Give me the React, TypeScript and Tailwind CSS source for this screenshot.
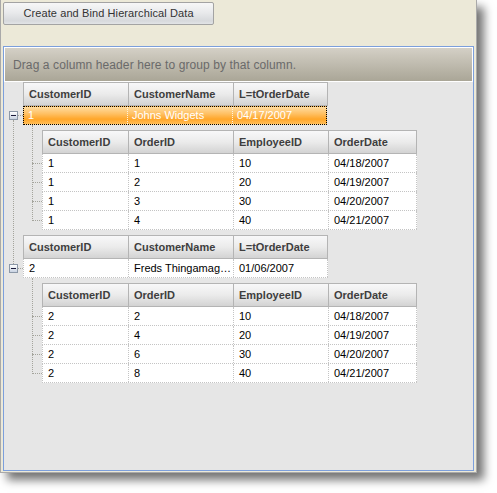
import React from "react";

const font = { fontFamily: '"Liberation Sans", Arial, sans-serif' };

type Col = { label: string; w: string };

const parentCols: Col[] = [
  { label: "CustomerID", w: "w-[105px]" },
  { label: "CustomerName", w: "w-[105px]" },
  { label: "L=tOrderDate", w: "w-[94px]" },
];

const childCols: Col[] = [
  { label: "CustomerID", w: "w-[86px]" },
  { label: "OrderID", w: "w-[105px]" },
  { label: "EmployeeID", w: "w-[95px]" },
  { label: "OrderDate", w: "w-[88px]" },
];

function Header({ cols }: { cols: Col[] }) {
  return (
    <div className="flex h-[24px] w-fit border-y border-l border-[#b4b4b4] bg-gradient-to-b from-[#f8f8f9] via-[#ebebeb] to-[#d3d3d3]">
      {cols.map((c) => (
        <div
          key={c.label}
          className={`${c.w} flex items-center overflow-hidden whitespace-nowrap border-r border-[#b4b4b4] pl-[5px] text-[11px] font-bold text-[#3e3e3e]`}
        >
          {c.label}
        </div>
      ))}
    </div>
  );
}

function Row({ cols, values, selected }: { cols: Col[]; values: string[]; selected?: boolean }) {
  if (selected) {
    return (
      <div className="flex h-[19px] w-fit border border-dotted border-black bg-[linear-gradient(to_bottom,#ffdca0_0%,#ffc063_40%,#ffa629_72%,#ffbd58_100%)]">
        {cols.map((c, i) => (
          <div
            key={c.label}
            className={`${i === 0 ? "w-[104px]" : i === cols.length - 1 ? "w-[93px]" : c.w} flex items-center overflow-hidden whitespace-nowrap ${i < cols.length - 1 ? "border-r border-dotted border-[#fff3dd]" : ""} pl-[4px] text-[11px] text-white`}
          >
            {values[i]}
          </div>
        ))}
      </div>
    );
  }
  return (
    <div className="flex h-[19px] w-fit border-b border-l border-dotted border-[#c4c4c4] bg-white">
      {cols.map((c, i) => (
        <div
          key={c.label}
          className={`${c.w} flex items-center overflow-hidden whitespace-nowrap border-r border-dotted border-[#c4c4c4] pl-[5px] text-[11px] text-black`}
        >
          {values[i]}
        </div>
      ))}
    </div>
  );
}

function MinusBox({ top }: { top: string }) {
  return (
    <div
      className={`absolute left-[5px] ${top} flex h-[9px] w-[9px] items-center justify-center border border-[#8c98a8] bg-gradient-to-b from-white to-[#c9d3e2]`}
    >
      <div className="h-px w-[5px] bg-[#1a1a3a]" />
    </div>
  );
}

const VLine = ({ cls }: { cls: string }) => (
  <div className={`absolute w-0 border-l border-dotted border-[#a4a49c] ${cls}`} />
);
const HLine = ({ cls }: { cls: string }) => (
  <div className={`absolute h-0 border-t border-dotted border-[#a4a49c] ${cls}`} />
);

export default function App() {
  const orders1 = [
    ["1", "1", "10", "04/18/2007"],
    ["1", "2", "20", "04/19/2007"],
    ["1", "3", "30", "04/20/2007"],
    ["1", "4", "40", "04/21/2007"],
  ];
  const orders2 = [
    ["2", "2", "10", "04/18/2007"],
    ["2", "4", "20", "04/19/2007"],
    ["2", "6", "30", "04/20/2007"],
    ["2", "8", "40", "04/21/2007"],
  ];
  return (
    <div className="h-[493px] w-[497px] bg-white" style={font}>
      <div className="flex h-[473px] w-[477px] flex-col border-x border-b border-[#a9a9a9] bg-[#ece9d8] pl-[2px] pr-[2px] shadow-[7px_7px_9px_rgba(0,0,0,0.55)]">
        <div className="mt-[2px] flex h-[23px] w-[211px] items-center justify-center rounded-[2px] border border-[#a3a3a3] bg-[linear-gradient(to_bottom,#f7f7f7_0%,#e9eaec_45%,#d7d9dc_85%,#e2e4e6_100%)] text-[11px] tracking-[0.1px] text-[#333]">
          Create and Bind Hierarchical Data
        </div>
        <div className="mt-[21px] flex h-[425px] flex-col border border-[#7c9fdc]">
          <div className="flex h-[35px] shrink-0 items-center border border-white bg-gradient-to-b from-[#d4d0c6] to-[#aaa697] pl-[8px] text-[12px] tracking-[0.1px] text-[#6a6a6a]">
            Drag a column header here to group by that column.
          </div>
          <div className="relative flex-1 bg-[#e6e6e6]">
            <MinusBox top="top-[29px]" />
            <MinusBox top="top-[182px]" />
            <VLine cls="left-[9px] top-[38px] h-[144px]" />
            <HLine cls="left-[14px] top-[33px] w-[5px]" />
            <HLine cls="left-[14px] top-[186px] w-[5px]" />

            <VLine cls="left-[28px] top-[43px] h-[96px]" />
            <HLine cls="left-[28px] top-[81px] w-[10px]" />
            <HLine cls="left-[28px] top-[100px] w-[10px]" />
            <HLine cls="left-[28px] top-[119px] w-[10px]" />
            <HLine cls="left-[28px] top-[138px] w-[10px]" />

            <VLine cls="left-[28px] top-[196px] h-[96px]" />
            <HLine cls="left-[28px] top-[234px] w-[10px]" />
            <HLine cls="left-[28px] top-[253px] w-[10px]" />
            <HLine cls="left-[28px] top-[272px] w-[10px]" />
            <HLine cls="left-[28px] top-[291px] w-[10px]" />

            <div className="flex flex-col">
              <div className="ml-[19px] flex flex-col">
                <Header cols={parentCols} />
                <Row cols={parentCols} values={["1", "Johns Widgets", "04/17/2007"]} selected />
              </div>
              <div className="ml-[38px] mt-[5px] flex flex-col">
                <Header cols={childCols} />
                {orders1.map((o, i) => (
                  <Row key={i} cols={childCols} values={o} />
                ))}
              </div>
              <div className="ml-[19px] mt-[5px] flex flex-col">
                <Header cols={parentCols} />
                <Row cols={parentCols} values={["2", "Freds Thingamag…", "01/06/2007"]} />
              </div>
              <div className="ml-[38px] mt-[5px] flex flex-col">
                <Header cols={childCols} />
                {orders2.map((o, i) => (
                  <Row key={i} cols={childCols} values={o} />
                ))}
              </div>
            </div>
          </div>
        </div>
      </div>
    </div>
  );
}
